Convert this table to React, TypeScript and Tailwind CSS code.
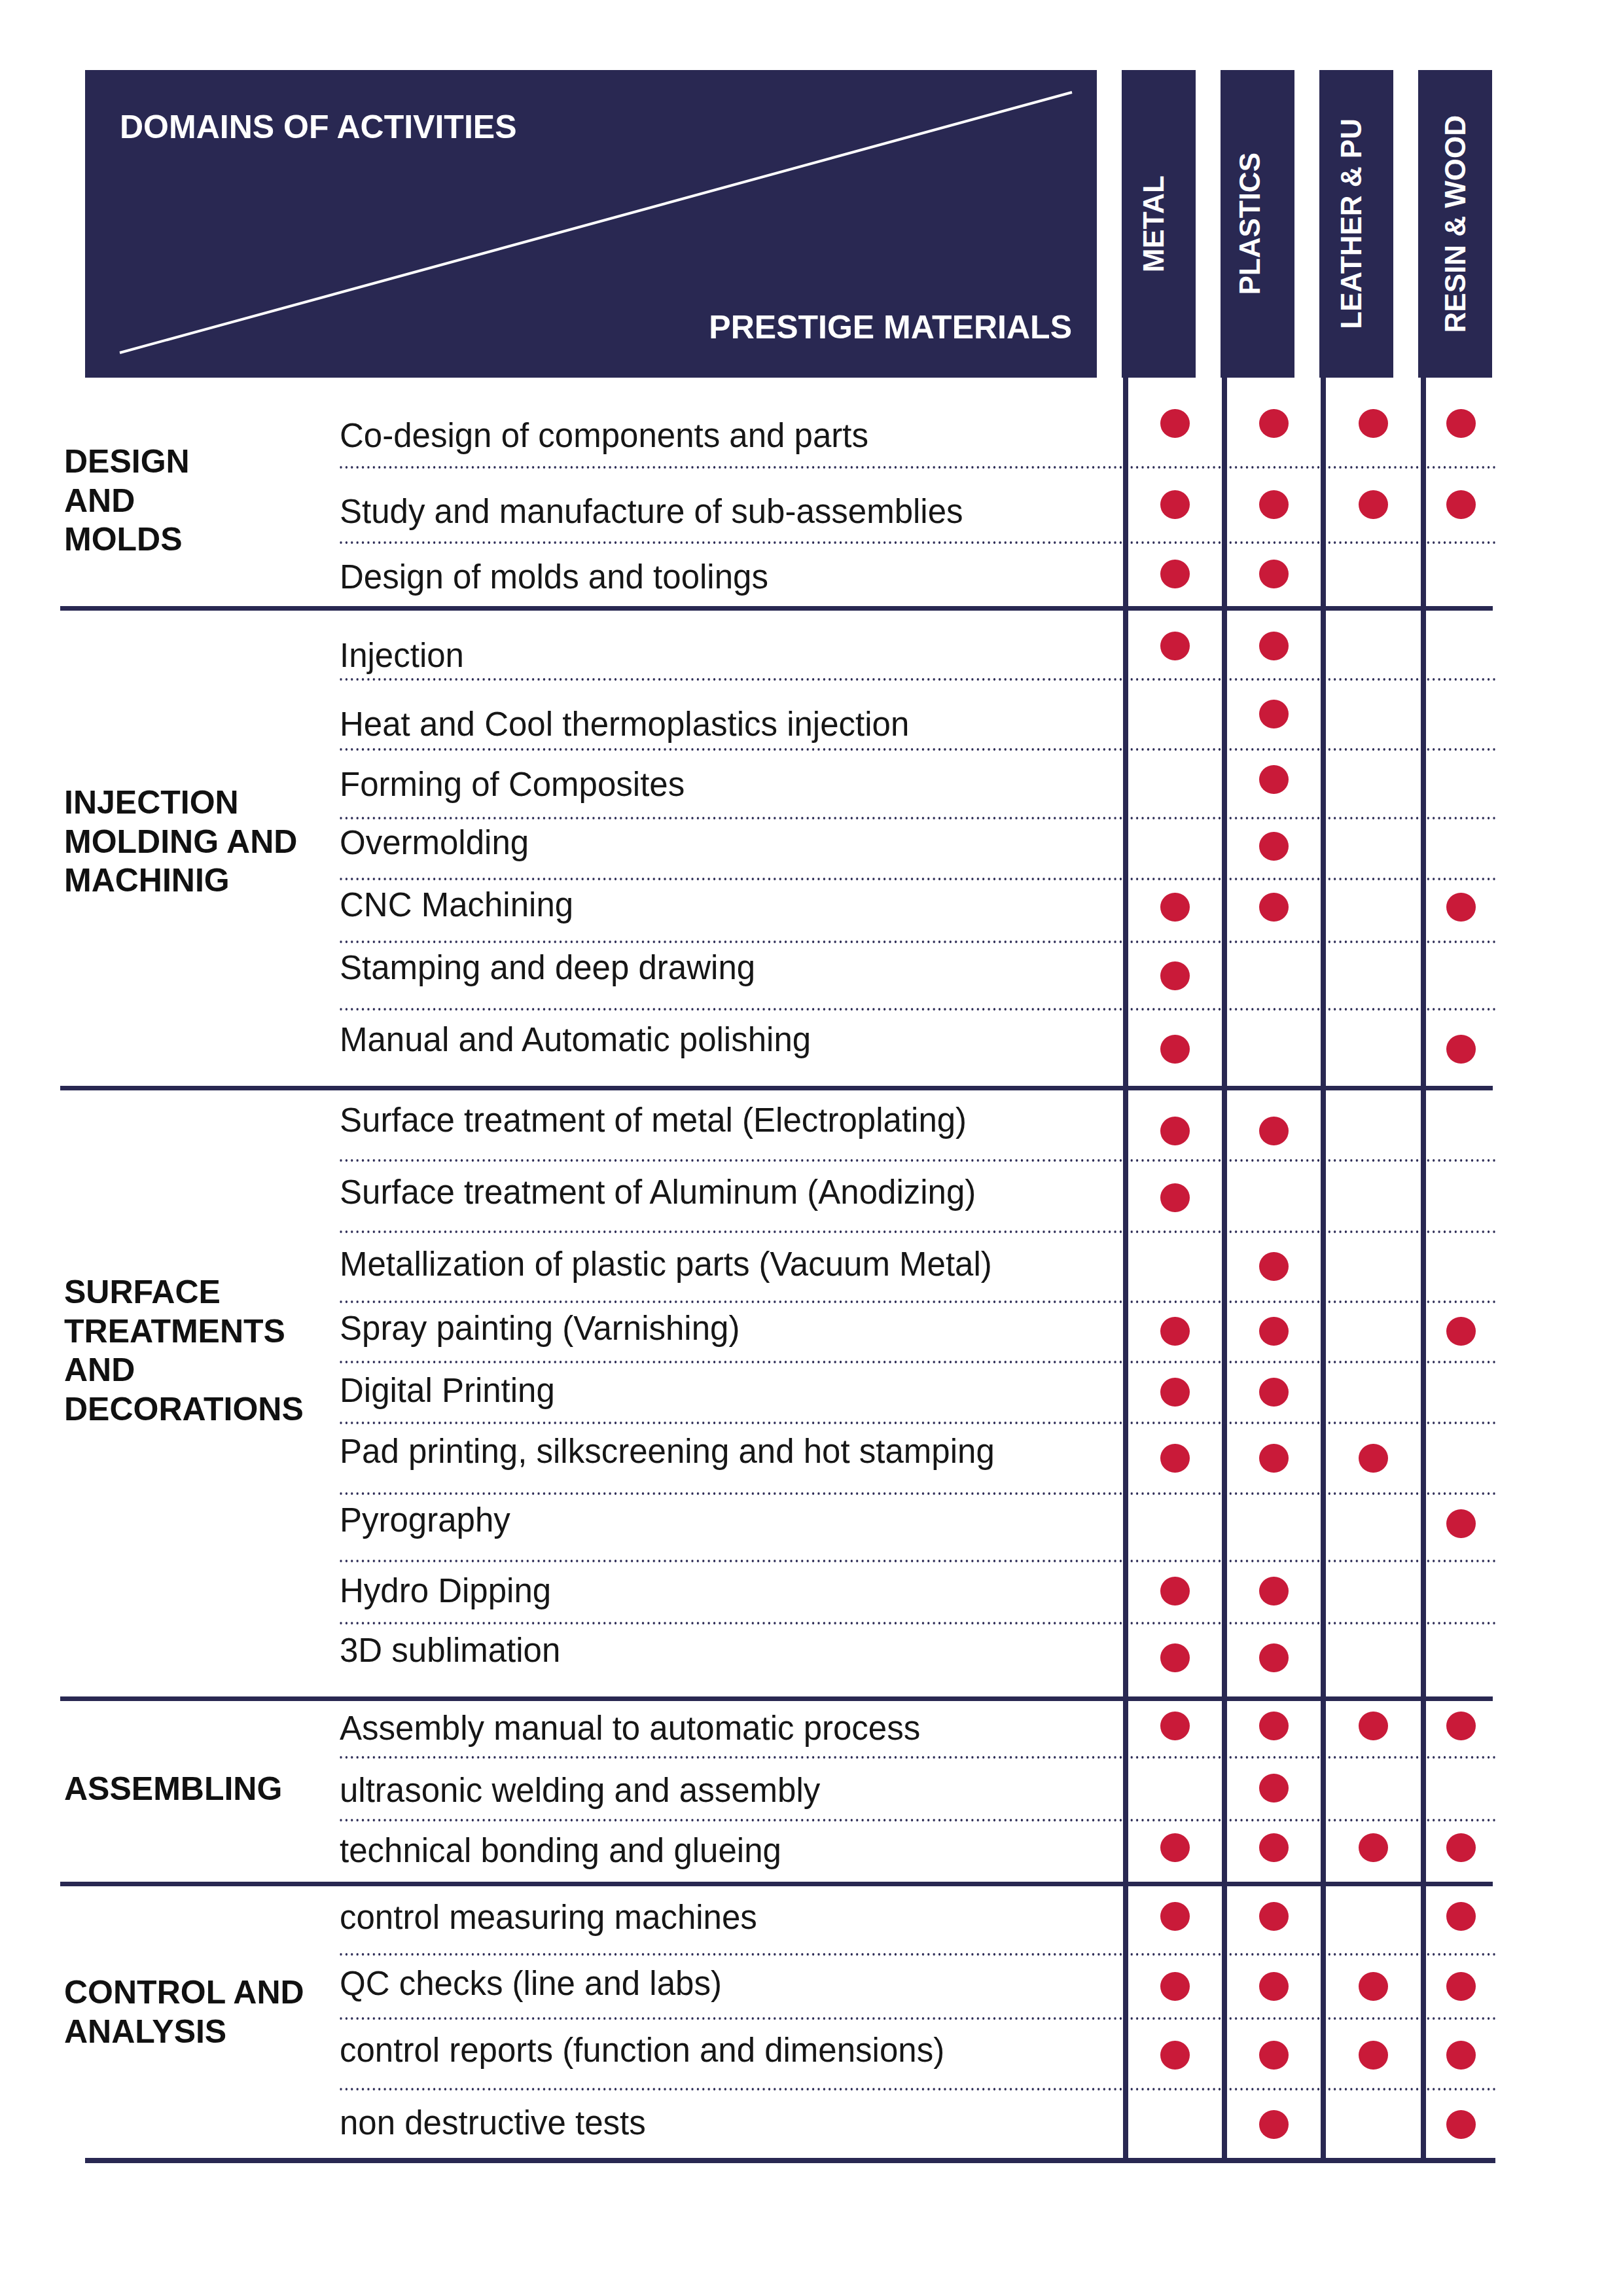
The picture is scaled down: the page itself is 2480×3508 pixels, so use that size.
import React from "react";

type Row = { text: string; h: number; t: number; d: number; m: number[] };
type Section = { label: string[]; labelTop: number; rows: Row[] };

const materials = [
  { name: "METAL", nudge: "pr-[16px]" },
  { name: "PLASTICS", nudge: "pr-[24px]" },
  { name: "LEATHER & PU", nudge: "pr-[16px]" },
  { name: "RESIN & WOOD", nudge: "pr-0" },
];

// h = row height, t = text offset, d = dot offset (px, measured from the print)
const sections: Section[] = [
  {
    label: ["DESIGN", "AND", "MOLDS"],
    labelTop: 99,
    rows: [
      { text: "Co-design of components and parts", h: 139, t: 63, d: 48, m: [1, 1, 1, 1] },
      { text: "Study and manufacture of sub-assemblies", h: 115, t: 40, d: 33, m: [1, 1, 1, 1] },
      { text: "Design of molds and toolings", h: 95, t: 25, d: 24, m: [1, 1, 0, 0] },
    ],
  },
  {
    label: ["INJECTION", "MOLDING AND", "MACHINIG"],
    labelTop: 264,
    rows: [
      { text: "Injection", h: 107, t: 43, d: 32, m: [1, 1, 0, 0] },
      { text: "Heat and Cool thermoplastics injection", h: 107, t: 41, d: 29, m: [0, 1, 0, 0] },
      { text: "Forming of Composites", h: 105, t: 26, d: 22, m: [0, 1, 0, 0] },
      { text: "Overmolding", h: 93, t: 10, d: 19, m: [0, 1, 0, 0] },
      { text: "CNC Machining", h: 96, t: 12, d: 19, m: [1, 1, 0, 1] },
      { text: "Stamping and deep drawing", h: 103, t: 12, d: 28, m: [1, 0, 0, 0] },
      { text: "Manual and Automatic polishing", h: 115, t: 19, d: 37, m: [1, 0, 0, 1] },
    ],
  },
  {
    label: ["SURFACE", "TREATMENTS", "AND", "DECORATIONS"],
    labelTop: 279,
    rows: [
      { text: "Surface treatment of metal (Electroplating)", h: 109, t: 20, d: 40, m: [1, 1, 0, 0] },
      { text: "Surface treatment of Aluminum (Anodizing)", h: 109, t: 21, d: 33, m: [1, 0, 0, 0] },
      { text: "Metallization of plastic parts (Vacuum Metal)", h: 107, t: 22, d: 29, m: [0, 1, 0, 0] },
      { text: "Spray painting (Varnishing)", h: 92, t: 13, d: 21, m: [1, 1, 0, 1] },
      { text: "Digital Printing", h: 93, t: 16, d: 22, m: [1, 1, 0, 0] },
      { text: "Pad printing, silkscreening and hot stamping", h: 108, t: 16, d: 30, m: [1, 1, 1, 0] },
      { text: "Pyrography", h: 103, t: 13, d: 22, m: [0, 0, 0, 1] },
      { text: "Hydro Dipping", h: 95, t: 18, d: 22, m: [1, 1, 0, 0] },
      { text: "3D sublimation", h: 110, t: 14, d: 29, m: [1, 1, 0, 0] },
    ],
  },
  {
    label: ["ASSEMBLING"],
    labelTop: 105,
    rows: [
      { text: "Assembly manual to automatic process", h: 88, t: 16, d: 16, m: [1, 1, 1, 1] },
      { text: "ultrasonic welding and assembly", h: 96, t: 23, d: 23, m: [0, 1, 0, 0] },
      { text: "technical bonding and glueing", h: 92, t: 19, d: 18, m: [1, 1, 1, 1] },
    ],
  },
  {
    label: ["CONTROL AND", "ANALYSIS"],
    labelTop: 133,
    rows: [
      { text: "control measuring machines", h: 106, t: 22, d: 24, m: [1, 1, 0, 1] },
      { text: "QC checks (line and labs)", h: 98, t: 17, d: 25, m: [1, 1, 1, 1] },
      { text: "control reports (function and dimensions)", h: 108, t: 21, d: 32, m: [1, 1, 1, 1] },
      { text: "non destructive tests", h: 103, t: 24, d: 30, m: [0, 1, 0, 1] },
    ],
  },
];

const cellWidths = ["w-[151px]", "w-[151px]", "w-[153px]", "w-[114px]"];

function MatrixRow({ row, last }: { row: Row; last: boolean }) {
  return (
    <div
      className={
        last
          ? "flex"
          : "flex bg-[radial-gradient(circle,#292852_1.5px,transparent_2px)] bg-[length:8.4px_4px] bg-repeat-x bg-bottom"
      }
      style={{ height: row.h }}
    >
      <div className="w-[1197px] text-[51px] leading-none text-[#161616]" style={{ paddingTop: row.t }}>
        {row.text}
      </div>
      {row.m.map((on, i) => (
        <div key={i} className={`${cellWidths[i]} flex justify-center border-l-8 border-[#292852]`} style={{ paddingTop: row.d }}>
          {on ? <div className="w-[45px] h-[44px] rounded-full bg-[#c91a39]" /> : null}
        </div>
      ))}
    </div>
  );
}

export default function App() {
  return (
    <div className="w-[2480px] h-[3508px] bg-white pt-[107px] pl-[92px] font-['Liberation_Sans',Arial,sans-serif]">
      {/* header */}
      <div className="flex h-[470px]">
        <div className="relative ml-[38px] w-[1546px] h-full bg-[#292852] text-white font-bold text-[50px] leading-none flex flex-col justify-between pt-[62px] pb-[52px] pl-[53px] pr-[38px]">
          <svg className="absolute inset-0" width="1546" height="470" viewBox="0 0 1546 470">
            <line x1="53" y1="432" x2="1508" y2="34" stroke="white" strokeWidth="4" />
          </svg>
          <div className="relative">DOMAINS OF ACTIVITIES</div>
          <div className="relative text-right">PRESTIGE MATERIALS</div>
        </div>
        <div className="ml-[38px] flex gap-[38px]">
          {materials.map((mat) => (
            <div key={mat.name} className={`w-[113px] h-full bg-[#292852] flex items-center justify-center ${mat.nudge}`}>
              <span className="[writing-mode:vertical-rl] rotate-180 text-white font-bold text-[44px] leading-none whitespace-nowrap">
                {mat.name}
              </span>
            </div>
          ))}
        </div>
      </div>

      {/* body */}
      <div className="flex flex-col">
        {sections.map((sec, si) => (
          <React.Fragment key={si}>
            {si > 0 && <div className="w-[2189px] h-[7px] bg-[#292852]" />}
            <div className="flex">
              <div className="w-[427px] pl-[6px] text-[50px] font-bold leading-[59.5px] text-[#111]" style={{ paddingTop: sec.labelTop }}>
                {sec.label.map((l) => (
                  <div key={l} className="whitespace-nowrap">{l}</div>
                ))}
              </div>
              <div className="flex flex-col">
                {sec.rows.map((row, ri) => (
                  <MatrixRow key={row.text} row={row} last={ri === sec.rows.length - 1} />
                ))}
              </div>
            </div>
          </React.Fragment>
        ))}
        <div className="ml-[38px] w-[2155px] h-[8px] bg-[#292852]" />
      </div>
    </div>
  );
}
